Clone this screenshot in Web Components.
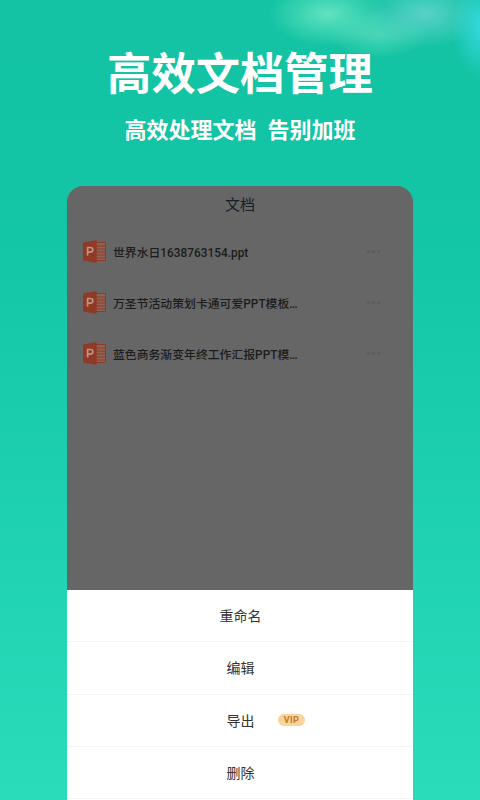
<!DOCTYPE html>
<html lang="zh">
<head>
<meta charset="utf-8">
<title>高效文档管理</title>
<style>
    html, body {
        margin: 0;
        height: 800px;
        overflow: hidden;
        font-family: Roboto, "Noto Sans CJK SC", sans-serif;
    }
</style>
</head>
<body>
<promo-screen>
    <span slot="title">高效文档管理</span>
    <span slot="subtitle">高效处理文档&nbsp;&nbsp;告别加班</span>

    <doc-card heading="文档">
        <doc-row>世界水日1638763154.ppt</doc-row>
        <doc-row>万圣节活动策划卡通可爱PPT模板设计.ppt</doc-row>
        <doc-row>蓝色商务渐变年终工作汇报PPT模板设计.ppt</doc-row>

        <action-sheet slot="overlay">
            <sheet-item>重命名</sheet-item>
            <sheet-item>编辑</sheet-item>
            <sheet-item vip>导出</sheet-item>
            <sheet-item>删除</sheet-item>
        </action-sheet>
    </doc-card>
</promo-screen>

<script>
class PromoScreen extends HTMLElement {
    constructor() {
        super();
        const shadow = this.attachShadow({ mode: "open" });
        shadow.innerHTML = `
            <style>
                :host {
                    display: flex;
                    flex-direction: column;
                    align-items: center;
                    height: 800px;
                    overflow: hidden;
                    color: #fff;
                    background:
                        radial-gradient(ellipse 30px 50px at 482px 28px, rgba(60, 220, 235, 0.85), rgba(60, 220, 235, 0) 100%),
                        radial-gradient(ellipse 60px 34px at 425px 14px, rgba(120, 215, 215, 0.7), rgba(120, 215, 215, 0) 100%),
                        radial-gradient(ellipse 50px 24px at 378px 34px, rgba(130, 235, 205, 0.5), rgba(130, 235, 205, 0) 100%),
                        radial-gradient(ellipse 60px 32px at 328px 14px, rgba(130, 240, 205, 0.7), rgba(130, 240, 205, 0) 100%),
                        linear-gradient(180deg, #13c3a3 0%, #13c6a6 30%, #2adcba 100%);
                }

                .title {
                    margin-top: 45px;
                    font-size: 44.3px;
                    line-height: 60px;
                    font-weight: 700;
                }

                .subtitle {
                    margin-top: 11px;
                    font-size: 22px;
                    line-height: 30px;
                    font-weight: 700;
                }

                ::slotted(doc-card) {
                    margin-top: 40px;
                }
            </style>
            <div class="title"><slot name="title"></slot></div>
            <div class="subtitle"><slot name="subtitle"></slot></div>
            <slot></slot>
        `;
    }
}

class DocCard extends HTMLElement {
    constructor() {
        super();
        const shadow = this.attachShadow({ mode: "open" });
        shadow.innerHTML = `
            <style>
                :host {
                    display: flex;
                    flex-direction: column;
                    position: relative;
                    flex: 1;
                    width: 346px;
                    overflow: hidden;
                    border-radius: 16px 16px 0 0;
                    background: #666;
                    color: #1a1a1a;
                }

                .heading {
                    height: 39px;
                    line-height: 39px;
                    text-align: center;
                    font-size: 15px;
                    color: #17202a;
                }

                .rows {
                    display: flex;
                    flex-direction: column;
                    padding-top: 1px;
                }
            </style>
            <div class="heading"></div>
            <div class="rows"><slot></slot></div>
            <slot name="overlay"></slot>
        `;
        shadow.querySelector(".heading").textContent = this.getAttribute("heading");
    }
}

class DocRow extends HTMLElement {
    constructor() {
        super();
        const shadow = this.attachShadow({ mode: "open" });
        shadow.innerHTML = `
            <style>
                :host {
                    display: flex;
                    align-items: center;
                    height: 51px;
                    padding-left: 16px;
                    font-size: 11.85px;
                    font-weight: 500;
                    color: #1c1c1c;
                }

                svg {
                    flex: none;
                    width: 23px;
                    height: 23px;
                }

                .name {
                    width: 189px;
                    margin-left: 7px;
                    white-space: nowrap;
                    overflow: hidden;
                    text-overflow: ellipsis;
                }

                .more {
                    display: flex;
                    gap: 2px;
                    margin-left: 65px;
                }

                .more i {
                    width: 3px;
                    height: 3px;
                    border-radius: 50%;
                    background: #5c5c5c;
                }
            </style>
            <svg viewBox="0 0 23 23">
                <path d="M13 2.5H22.5V20.5H13Z" fill="#8f6458"/>
                <path d="M13 2.5H22.5V20.5H13Z" fill="none" stroke="#8f3a26"/>
                <path d="M13 6H22M13 9H22M13 12H22M13 15H22M13 18H22" stroke="#8f3a26" stroke-width="1.1"/>
                <path d="M0 2.5 13.5 0V23L0 20.5Z" fill="#8f3a26"/>
                <path d="M4.6 15.5V7.5H7.4C8.9 7.5 9.8 8.4 9.8 9.8C9.8 11.2 8.9 12.1 7.4 12.1H5.4" fill="none" stroke="#c09484" stroke-width="1.7"/>
            </svg>
            <div class="name"><slot></slot></div>
            <div class="more"><i></i><i></i><i></i></div>
        `;
    }
}

class ActionSheet extends HTMLElement {
    constructor() {
        super();
        const shadow = this.attachShadow({ mode: "open" });
        shadow.innerHTML = `
            <style>
                :host {
                    display: flex;
                    flex-direction: column;
                    position: absolute;
                    left: 0;
                    right: 0;
                    top: 404px;
                    bottom: 0;
                    background: #fff;
                }
            </style>
            <slot></slot>
        `;
    }
}

class SheetItem extends HTMLElement {
    constructor() {
        super();
        const shadow = this.attachShadow({ mode: "open" });
        shadow.innerHTML = `
            <style>
                :host {
                    display: flex;
                    align-items: center;
                    justify-content: center;
                    position: relative;
                    flex: none;
                    box-sizing: border-box;
                    height: 52.3px;
                    padding-left: 1px;
                    padding-bottom: 1px;
                    border-bottom: 1px solid #f5f5f5;
                    font-size: 14px;
                    font-weight: 400;
                    color: #333;
                }

                .vip {
                    position: absolute;
                    left: 211px;
                    top: 19px;
                    width: 27px;
                    height: 12px;
                    line-height: 12px;
                    border-radius: 6px;
                    background: #f9d39c;
                    color: #bf7a2e;
                    font-size: 9px;
                    font-weight: 700;
                    letter-spacing: 0.4px;
                    text-align: center;
                }
            </style>
            <slot></slot>
            ${this.hasAttribute("vip") ? '<span class="vip">VIP</span>' : ""}
        `;
    }
}

customElements.define("promo-screen", PromoScreen);
customElements.define("doc-card", DocCard);
customElements.define("doc-row", DocRow);
customElements.define("action-sheet", ActionSheet);
customElements.define("sheet-item", SheetItem);
</script>
</body>
</html>
